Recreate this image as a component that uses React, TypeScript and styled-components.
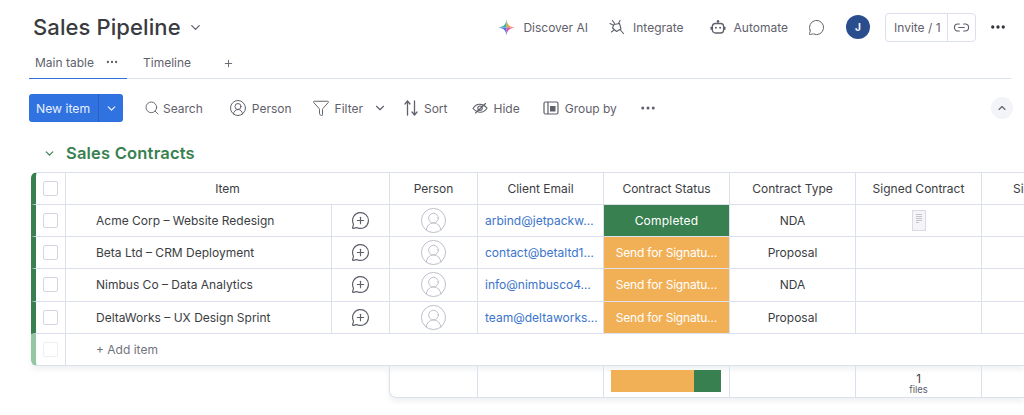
import React from 'react';
import styled, {createGlobalStyle} from 'styled-components';
import {
  ChevronDown,
  ChevronUp,
  CircleUserRound,
  Ellipsis,
  Funnel,
  Link2,
  MessageCircle,
  MessageCirclePlus,
  Plus,
  Search,
} from 'lucide-react';

const GREEN = '#38804f';
const ORANGE = '#f2b056';
const LINE = '#dcdfec';
const TEXT = '#3c3d42';
const GRAY = '#5f616b';

const GlobalStyle = createGlobalStyle`
  html, body {
    margin: 0;
    background: #fff;
  }
  body {
    font-family: Inter, "Liberation Sans", sans-serif;
    color: ${TEXT};
  }
  * {
    box-sizing: border-box;
  }
`;

const Page = styled.div`
  width: 1024px;
  height: 415px;
  overflow: hidden;
  background: #fff;
`;

const TopBar = styled.header`
  display: flex;
  align-items: center;
  height: 54px;
  padding: 0 17px 0 33px;
`;
const BoardTitle = styled.h1`
  margin: 0;
  font-size: 22px;
  font-weight: 500;
  letter-spacing: 0.1px;
  color: #3a3b40;
`;
const TitleCaret = styled.span`
  display: flex;
  margin-left: 7px;
  color: ${GRAY};
`;
const TopActions = styled.div`
  display: flex;
  align-items: center;
  margin-left: auto;
`;
const TopAction = styled.div<{$gap: number}>`
  display: flex;
  align-items: center;
  gap: 8px;
  margin-right: ${props => props.$gap}px;
  font-size: 12px;
  color: ${GRAY};
`;
const Avatar = styled.div`
  display: flex;
  align-items: center;
  justify-content: center;
  width: 24px;
  height: 24px;
  margin: 0 15px 0 21px;
  border-radius: 50%;
  background: #2a4e8d;
  color: #fff;
  font-size: 10px;
  font-weight: 700;
`;
const InviteBox = styled.div`
  display: flex;
  align-items: stretch;
  height: 29px;
  border: 1px solid ${LINE};
  border-radius: 4px;
  font-size: 12px;
  color: ${GRAY};
`;
const InviteLabel = styled.div`
  display: flex;
  align-items: center;
  width: 62px;
  padding-left: 8px;
  border-right: 1px solid ${LINE};
`;
const InviteLink = styled.div`
  display: flex;
  align-items: center;
  justify-content: center;
  width: 27px;
`;
const MoreButton = styled.div`
  display: flex;
  margin-left: 13px;
  color: #323338;
`;

const Tabs = styled.nav`
  display: flex;
  align-items: center;
  margin: 0 13px 0 29px;
  border-bottom: 1px solid ${LINE};
`;
const Tab = styled.div<{$active?: boolean}>`
  display: flex;
  align-items: center;
  gap: 11px;
  height: 25px;
  width: ${props => (props.$active ? '98px' : 'auto')};
  padding-left: ${props => (props.$active ? '6px' : '16px')};
  padding-bottom: 8px;
  margin-bottom: -1px;
  border-bottom: 1px solid ${props => (props.$active ? '#2f72e0' : 'transparent')};
  font-size: 12px;
  color: ${GRAY};
`;
const AddTab = styled.div`
  display: flex;
  margin-left: 32px;
  margin-bottom: 6px;
  color: ${GRAY};
`;

const Toolbar = styled.div`
  display: flex;
  align-items: center;
  height: 28px;
  margin-top: 15px;
  padding: 0 11px 0 29px;
`;
const NewItem = styled.div`
  display: flex;
  align-items: stretch;
  width: 94px;
  height: 28px;
  border-radius: 3px;
  background: #2f72e0;
  color: #e8f0ff;
  font-size: 12.2px;
`;
const NewItemLabel = styled.div`
  display: flex;
  align-items: center;
  width: 70px;
  padding-left: 7px;
  border-right: 1px solid #2560c2;
`;
const NewItemCaret = styled.div`
  display: flex;
  align-items: center;
  justify-content: center;
  flex: 1;
`;
const Tool = styled.div<{$ml: number; $gap?: number}>`
  display: flex;
  align-items: center;
  gap: ${props => props.$gap ?? 5}px;
  margin-left: ${props => props.$ml}px;
  font-size: 12px;
  color: ${GRAY};
`;
const FilterCaret = styled.span`
  display: flex;
  margin-left: 5px;
`;
const CollapseButton = styled.div`
  display: flex;
  align-items: center;
  justify-content: center;
  width: 22px;
  height: 22px;
  margin-left: auto;
  border-radius: 50%;
  background: #f3f4f8;
  color: ${GRAY};
`;

const GroupHeader = styled.div`
  display: flex;
  align-items: center;
  gap: 10px;
  height: 22px;
  margin: 20px 0 8px 43px;
  color: ${GREEN};
`;
const GroupTitle = styled.h2`
  margin: 0;
  font-size: 16.5px;
  font-weight: 600;
  letter-spacing: 0.2px;
`;

const Table = styled.div`
  margin-left: 31px;
  width: 993px;
`;
const Row = styled.div<{$bar?: string; $top?: boolean; $bottom?: boolean}>`
  display: flex;
  height: ${props => (props.$top ? '33px' : '32.2px')};
  border-left: 5px solid ${props => props.$bar || GREEN};
  border-bottom: 1px solid ${LINE};
  ${props => (props.$top ? `border-top: 1px solid ${LINE}; border-top-left-radius: 6px;` : '')}
  ${props =>
    props.$bottom
      ? 'border-bottom-left-radius: 6px; box-shadow: 0 4px 5px rgba(80, 85, 120, 0.08);'
      : ''}
`;
const Cell = styled.div<{$w: number; $plain?: boolean}>`
  display: flex;
  flex: 0 0 ${props => props.$w}px;
  align-items: center;
  justify-content: center;
  min-width: 0;
  white-space: nowrap;
  font-size: 12px;
  ${props => (props.$plain ? '' : `border-right: 1px solid ${LINE};`)}
`;
const StatusCell = styled(Cell)<{$fill: string; $tight?: boolean}>`
  background: ${props => props.$fill};
  color: #fff;
  letter-spacing: ${props => (props.$tight ? '-0.2px' : '0.2px')};
`;
const ItemName = styled(Cell)`
  justify-content: flex-start;
  padding-left: 30px;
`;
const EmailCell = styled(Cell)`
  justify-content: flex-start;
  padding-left: 7px;
  color: #3b74cc;
`;
const TailHeader = styled(Cell)`
  justify-content: flex-start;
  overflow: hidden;
  padding-left: 31px;
`;
const CheckBox = styled.span<{$faint?: boolean}>`
  display: block;
  width: 15px;
  height: 15px;
  border: 1px solid ${props => (props.$faint ? '#eceef5' : '#d3d6e2')};
  border-radius: 2px;
`;
const AddLabel = styled.div`
  display: flex;
  align-items: center;
  padding-left: 30px;
  font-size: 12px;
  color: #72747d;
`;
const DocThumb = styled.div`
  display: flex;
  flex-direction: column;
  gap: 1px;
  width: 14px;
  height: 21px;
  padding: 3px 3px;
  border: 1px solid #d9dbe6;
  background: #f5f5f7;
`;
const DocLine = styled.span<{$short?: boolean}>`
  display: block;
  width: ${props => (props.$short ? '60%' : '100%')};
  height: 1px;
  background: #c4c5cb;
`;

const Summary = styled.div`
  display: flex;
  width: 635px;
  height: 32px;
  margin-left: 358px;
  border-left: 1px solid ${LINE};
  border-bottom: 1px solid ${LINE};
  border-bottom-left-radius: 7px;
  box-shadow: 0 4px 5px rgba(80, 85, 120, 0.08);
`;
const StatusBar = styled.div`
  display: flex;
  width: 110px;
  height: 22px;
  margin-right: 1px;
`;
const BarPart = styled.span<{$color: string; $w: number}>`
  display: block;
  width: ${props => props.$w}px;
  background: ${props => props.$color};
`;
const FileCount = styled.div`
  display: flex;
  flex-direction: column;
  align-items: center;
  gap: 1px;
  padding-top: 6px;
  font-size: 11.5px;
  line-height: 10px;
`;
const FilesLabel = styled.span`
  font-size: 9.5px;
  line-height: 10px;
  color: ${GRAY};
`;

const COLS = {check: 30, name: 266, comment: 58, item: 324, person: 88, email: 126, status: 126, type: 126, signed: 126};

const SparkIcon = () => (
  <svg width="17" height="17" viewBox="0 0 17 17">
    <path d="M8.5 0.5 C9.2 5.5 11 7.6 16.5 8.5 L8.5 8.5Z" fill="#f4a03c" />
    <path d="M16.5 8.5 C11 9.4 9.2 11.5 8.5 16.5 L8.5 8.5Z" fill="#e0559a" />
    <path d="M8.5 16.5 C7.8 11.5 6 9.4 0.5 8.5 L8.5 8.5Z" fill="#5b6ff0" />
    <path d="M0.5 8.5 C6 7.6 7.8 5.5 8.5 0.5 L8.5 8.5Z" fill="#35b8a0" />
  </svg>
);

const IntegrateIcon = () => (
  <svg width="16" height="16" viewBox="0 0 16 16" fill="none" stroke={GRAY} strokeWidth="1.1" strokeLinecap="round">
    <path d="M5 5.5 L10.5 4.5 L12 10 L7.5 12.5 L3.5 9Z" strokeLinejoin="round" />
    <path d="M3.5 1.5 L5.5 4.5 M1 4.5 L4 6 M11 10.5 L14.5 14.5 M2.5 13 L5 10.8 M11 1.5 L9.5 4.5" />
  </svg>
);

const AutomateIcon = () => (
  <svg width="16" height="16" viewBox="0 0 16 16" fill="none">
    <rect x="2.4" y="4.5" width="11.2" height="9.5" rx="3" stroke={GRAY} strokeWidth="1.3" />
    <rect x="0.5" y="7.5" width="1.6" height="3.5" rx="0.8" fill={GRAY} />
    <rect x="13.9" y="7.5" width="1.6" height="3.5" rx="0.8" fill={GRAY} />
    <circle cx="8" cy="2.2" r="1.2" fill={GRAY} />
    <path d="M8 3v1.5" stroke={GRAY} />
    <circle cx="5.9" cy="8.8" r="1" fill={GRAY} />
    <circle cx="10.1" cy="8.8" r="1" fill={GRAY} />
  </svg>
);

const SortIcon = () => (
  <svg width="14" height="18" viewBox="0 0 14 18" fill="none" stroke={GRAY} strokeWidth="1.3" strokeLinecap="round" strokeLinejoin="round">
    <path d="M3.5 16V2 M1 5 L3.5 2 L6 5" />
    <path d="M10.5 2V16 M8 13 L10.5 16 L13 13" />
  </svg>
);

const HideIcon = () => (
  <svg width="16" height="16" viewBox="0 0 16 16" fill="none" stroke={GRAY} strokeWidth="1.1" strokeLinecap="round">
    <path d="M1 8.5 C3.5 4.5 7 3.8 10 4.6 C12 5.2 13.8 6.6 15 8 C13 11.5 9.5 12.6 6.5 12 C4.4 11.6 2.4 10.2 1 8.5Z" />
    <circle cx="8" cy="8.2" r="2.2" />
    <path d="M3.5 13 L13.5 3.5" />
  </svg>
);

const GroupByIcon = () => (
  <svg width="16" height="16" viewBox="0 0 16 16" fill="none">
    <rect x="1" y="2" width="14" height="12" rx="1.5" stroke={GRAY} strokeWidth="1.2" />
    <path d="M5 2v12" stroke={GRAY} strokeWidth="1.2" />
    <rect x="7" y="6" width="5.5" height="5.5" fill={GRAY} />
  </svg>
);

const rows = [
  {name: 'Acme Corp – Website Redesign', email: 'arbind@jetpackw…', status: 'Completed', type: 'NDA', doc: true},
  {name: 'Beta Ltd – CRM Deployment', email: 'contact@betaltd1…', status: 'Send for Signatu…', type: 'Proposal'},
  {name: 'Nimbus Co – Data Analytics', email: 'info@nimbusco4…', status: 'Send for Signatu…', type: 'NDA'},
  {name: 'DeltaWorks – UX Design Sprint', email: 'team@deltaworks…', status: 'Send for Signatu…', type: 'Proposal'},
];

export default function App() {
  return (
    <Page>
      <GlobalStyle />
      <TopBar>
        <BoardTitle>Sales Pipeline</BoardTitle>
        <TitleCaret>
          <ChevronDown size={15} />
        </TitleCaret>
        <TopActions>
          <TopAction $gap={21}>
            <SparkIcon />
            Discover AI
          </TopAction>
          <TopAction $gap={26}>
            <IntegrateIcon />
            Integrate
          </TopAction>
          <TopAction $gap={20}>
            <AutomateIcon />
            Automate
          </TopAction>
          <TopAction $gap={0}>
            <MessageCircle size={17} strokeWidth={1.4} />
          </TopAction>
          <Avatar>J</Avatar>
          <InviteBox>
            <InviteLabel>Invite / 1</InviteLabel>
            <InviteLink>
              <Link2 size={17} strokeWidth={1.6} />
            </InviteLink>
          </InviteBox>
          <MoreButton>
            <Ellipsis size={18} strokeWidth={2.4} />
          </MoreButton>
        </TopActions>
      </TopBar>

      <Tabs>
        <Tab $active>
          Main table
          <Ellipsis size={14} />
        </Tab>
        <Tab>Timeline</Tab>
        <AddTab>
          <Plus size={11} />
        </AddTab>
      </Tabs>

      <Toolbar>
        <NewItem>
          <NewItemLabel>New item</NewItemLabel>
          <NewItemCaret>
            <ChevronDown size={13} strokeWidth={2.4} />
          </NewItemCaret>
        </NewItem>
        <Tool $ml={21} $gap={3}>
          <Search size={16} strokeWidth={1.4} />
          Search
        </Tool>
        <Tool $ml={26}>
          <CircleUserRound size={18} strokeWidth={1.3} />
          Person
        </Tool>
        <Tool $ml={20}>
          <Funnel size={18} strokeWidth={1.3} />
          Filter
          <FilterCaret>
            <ChevronDown size={14} />
          </FilterCaret>
        </Tool>
        <Tool $ml={17} $gap={6}>
          <SortIcon />
          Sort
        </Tool>
        <Tool $ml={24} $gap={6}>
          <HideIcon />
          Hide
        </Tool>
        <Tool $ml={23} $gap={6}>
          <GroupByIcon />
          Group by
        </Tool>
        <Tool $ml={22}>
          <Ellipsis size={18} />
        </Tool>
        <CollapseButton>
          <ChevronUp size={12} strokeWidth={2.2} />
        </CollapseButton>
      </Toolbar>

      <GroupHeader>
        <ChevronDown size={13} strokeWidth={2.2} />
        <GroupTitle>Sales Contracts</GroupTitle>
      </GroupHeader>

      <Table>
        <Row $top>
          <Cell $w={COLS.check}>
            <CheckBox />
          </Cell>
          <Cell $w={COLS.item}>Item</Cell>
          <Cell $w={COLS.person}>Person</Cell>
          <Cell $w={COLS.email}>Client Email</Cell>
          <Cell $w={COLS.status}>Contract Status</Cell>
          <Cell $w={COLS.type}>Contract Type</Cell>
          <Cell $w={COLS.signed}>Signed Contract</Cell>
          <TailHeader $w={42} $plain>
            Signed
          </TailHeader>
        </Row>
        {rows.map(row => (
          <Row key={row.name}>
            <Cell $w={COLS.check}>
              <CheckBox />
            </Cell>
            <ItemName $w={COLS.name}>{row.name}</ItemName>
            <Cell $w={COLS.comment}>
              <MessageCirclePlus size={19} strokeWidth={1.5} color={GRAY} />
            </Cell>
            <Cell $w={COLS.person}>
              <CircleUserRound size={29} strokeWidth={0.8} color="#bcbec9" />
            </Cell>
            <EmailCell $w={COLS.email}>{row.email}</EmailCell>
            <StatusCell
              $w={COLS.status}
              $fill={row.status === 'Completed' ? GREEN : ORANGE}
              $tight={row.status !== 'Completed'}
            >
              {row.status}
            </StatusCell>
            <Cell $w={COLS.type}>{row.type}</Cell>
            <Cell $w={COLS.signed}>
              {row.doc && (
                <DocThumb>
                  <DocLine />
                  <DocLine />
                  <DocLine />
                  <DocLine />
                  <DocLine $short />
                </DocThumb>
              )}
            </Cell>
            <Cell $w={42} $plain />
          </Row>
        ))}
        <Row $bar="#93c6a3" $bottom>
          <Cell $w={COLS.check}>
            <CheckBox $faint />
          </Cell>
          <AddLabel>+ Add item</AddLabel>
        </Row>
        <Summary>
          <Cell $w={COLS.person} />
          <Cell $w={COLS.email} />
          <Cell $w={COLS.status}>
            <StatusBar>
              <BarPart $color={ORANGE} $w={83} />
              <BarPart $color={GREEN} $w={27} />
            </StatusBar>
          </Cell>
          <Cell $w={COLS.type} />
          <Cell $w={COLS.signed}>
            <FileCount>
              1
              <FilesLabel>files</FilesLabel>
            </FileCount>
          </Cell>
          <Cell $w={42} $plain />
        </Summary>
      </Table>
    </Page>
  );
}
